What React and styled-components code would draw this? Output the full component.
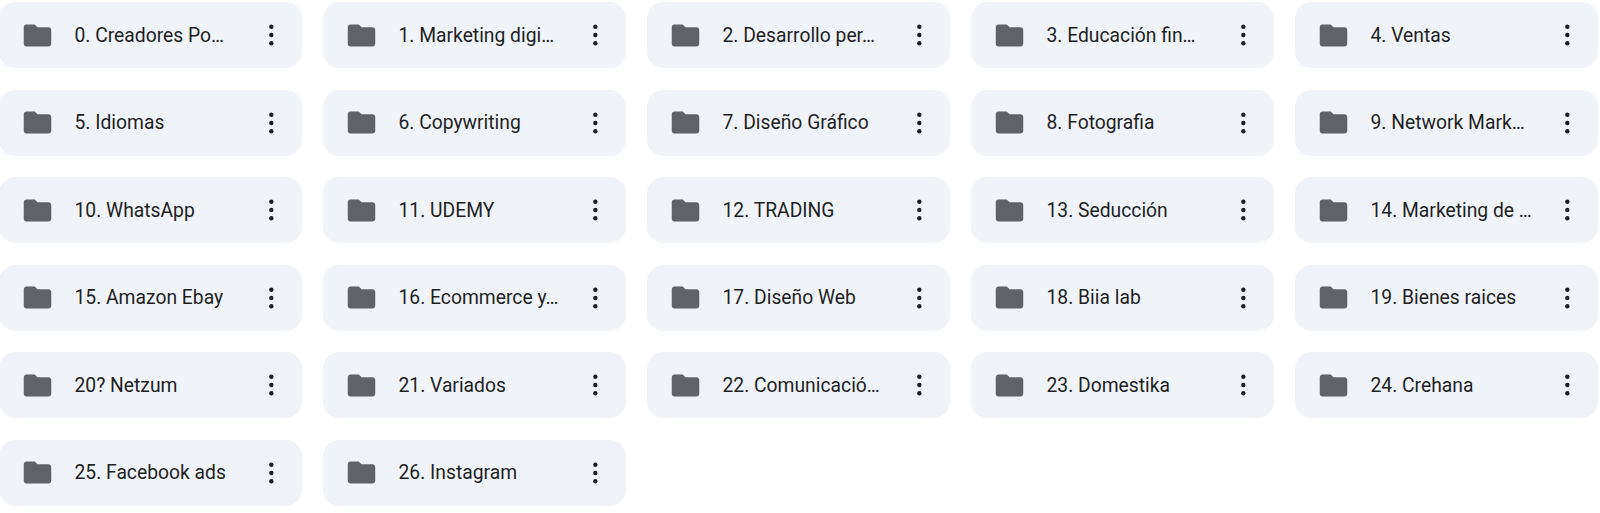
import React from "react"
import styled, { createGlobalStyle } from 'styled-components'

// ---- Data ----

// names as they show on screen, long ones are already cut in the list
const folders = [
    "0. Creadores Po…", "1. Marketing digi…", "2. Desarrollo per…", "3. Educación fin…", "4. Ventas",
    "5. Idiomas", "6. Copywriting", "7. Diseño Gráfico", "8. Fotografia", "9. Network Mark…",
    "10. WhatsApp", "11. UDEMY", "12. TRADING", "13. Seducción", "14. Marketing de …",
    "15. Amazon Ebay", "16. Ecommerce y…", "17. Diseño Web", "18. Biia lab", "19. Bienes raices",
    "20? Netzum", "21. Variados", "22. Comunicació…", "23. Domestika", "24. Crehana",
    "25. Facebook ads", "26. Instagram",
]

// ---- Styles ----

const GlobalStyle = createGlobalStyle`
html, body {
    margin: 0;
    padding: 0;
    height: 100%;
    background: #fff;
    overflow: hidden;
}
`;
const FolderGrid = styled.div`
display: grid;
grid-template-columns: repeat(5, 303px);
grid-auto-rows: 66px;
column-gap: 21px;
row-gap: 21.5px;
margin-left: -1px;
padding-top: 2px;
`;
const FolderCard = styled.div`
display: flex;
align-items: center;
background: #f0f4f9;
border-radius: 16px;
padding: 0 14px 0 22px;
min-width: 0;
`;
const FolderIcon = styled.svg`
width: 33px;
height: 33px;
flex: none;
fill: #5f6368;
`;
const FolderName = styled.span`
flex: 1;
min-width: 0;
margin: 0 12px 0 20.5px;
font-family: "Roboto", "Liberation Sans", sans-serif;
font-size: 19.3px;
color: #1f1f1f;
white-space: nowrap;
`;
const MoreIcon = styled.svg`
width: 32px;
height: 32px;
flex: none;
fill: #1f1f1f;
`;

const App = () => (
    <>
        <GlobalStyle />
        <FolderGrid>
            {folders.map(name => (
                <FolderCard key={name}>
                    <FolderIcon viewBox="0 0 24 24">
                        <path d="M10 4H4c-1.1 0-1.99.9-1.99 2L2 18c0 1.1.9 2 2 2h16c1.1 0 2-.9 2-2V8c0-1.1-.9-2-2-2h-8l-2-2z" />
                    </FolderIcon>
                    <FolderName>{name}</FolderName>
                    <MoreIcon viewBox="0 0 24 24">
                        <circle cx="11.5" cy="5.8" r="1.65" />
                        <circle cx="11.5" cy="12" r="1.65" />
                        <circle cx="11.5" cy="18.2" r="1.65" />
                    </MoreIcon>
                </FolderCard>
            ))}
        </FolderGrid>
    </>
)

export default App;
